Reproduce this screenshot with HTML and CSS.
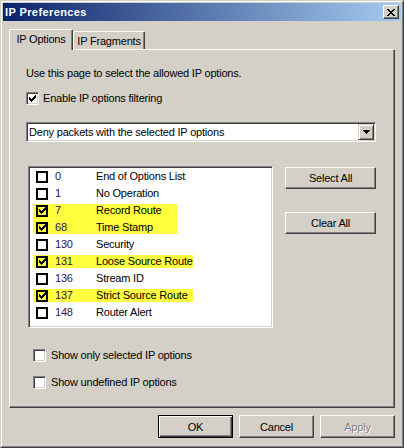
FILE: index.html
```html
<!DOCTYPE html>
<html>
<head>
<meta charset="utf-8">
<title>IP Preferences</title>
<link rel="stylesheet" href="styles.css">
</head>
<body>
<div class="window">
  <div class="frame">
    <div class="titlebar">
      <span class="title">IP Preferences</span>
      <div class="close">
        <svg width="8" height="7" viewBox="0 0 8 7" shape-rendering="crispEdges"><path d="M0 0h2v1H0z M6 0h2v1H6z M1 1h2v1H1z M5 1h2v1H5z M2 2h4v1H2z M3 3h2v1H3z M2 4h4v1H2z M1 5h2v1H1z M5 5h2v1H5z M0 6h2v1H0z M6 6h2v1H6z"/></svg>
      </div>
    </div>
    <div class="client">
      <div class="tabs">
        <div class="tab active">IP Options</div>
        <div class="tab">IP Fragments</div>
      </div>
      <div class="panel">
        <p class="desc">Use this page to select the allowed IP options.</p>
        <div class="check-row enable">
          <span class="cb"><svg width="7" height="7" viewBox="0 0 7 7" shape-rendering="crispEdges"><path d="M6 0h1v1H6z M5 1h2v1H5z M0 2h1v1H0z M4 2h3v1H4z M0 3h2v1H0z M3 3h3v1H3z M0 4h5v1H0z M1 5h3v1H1z M2 6h1v1H2z"/></svg></span>
          <span>Enable IP options filtering</span>
        </div>
        <div class="combo">
          <span class="combo-text">Deny packets with the selected IP options</span>
          <span class="combo-btn"><svg width="7" height="4" viewBox="0 0 7 4" shape-rendering="crispEdges"><path d="M0 0h7v1H0z M1 1h5v1H1z M2 2h3v1H2z M3 3h1v1H3z"/></svg></span>
        </div>
        <div class="list-area">
          <div class="listbox">
            <div class="row"><div class="band"><span class="lcb"></span><span class="num">0</span><span class="name">End of Options List</span></div></div>
            <div class="row"><div class="band"><span class="lcb"></span><span class="num">1</span><span class="name">No Operation</span></div></div>
            <div class="row"><div class="band on join"><span class="lcb"><svg width="7" height="7" viewBox="0 0 7 7" shape-rendering="crispEdges"><path d="M6 0h1v1H6z M5 1h2v1H5z M0 2h1v1H0z M4 2h3v1H4z M0 3h2v1H0z M3 3h3v1H3z M0 4h5v1H0z M1 5h3v1H1z M2 6h1v1H2z"/></svg></span><span class="num">7</span><span class="name">Record Route</span></div></div>
            <div class="row"><div class="band on"><span class="lcb"><svg width="7" height="7" viewBox="0 0 7 7" shape-rendering="crispEdges"><path d="M6 0h1v1H6z M5 1h2v1H5z M0 2h1v1H0z M4 2h3v1H4z M0 3h2v1H0z M3 3h3v1H3z M0 4h5v1H0z M1 5h3v1H1z M2 6h1v1H2z"/></svg></span><span class="num">68</span><span class="name">Time Stamp</span></div></div>
            <div class="row"><div class="band"><span class="lcb"></span><span class="num">130</span><span class="name">Security</span></div></div>
            <div class="row"><div class="band on wide"><span class="lcb"><svg width="7" height="7" viewBox="0 0 7 7" shape-rendering="crispEdges"><path d="M6 0h1v1H6z M5 1h2v1H5z M0 2h1v1H0z M4 2h3v1H4z M0 3h2v1H0z M3 3h3v1H3z M0 4h5v1H0z M1 5h3v1H1z M2 6h1v1H2z"/></svg></span><span class="num">131</span><span class="name">Loose Source Route</span></div></div>
            <div class="row"><div class="band"><span class="lcb"></span><span class="num">136</span><span class="name">Stream ID</span></div></div>
            <div class="row"><div class="band on wide"><span class="lcb"><svg width="7" height="7" viewBox="0 0 7 7" shape-rendering="crispEdges"><path d="M6 0h1v1H6z M5 1h2v1H5z M0 2h1v1H0z M4 2h3v1H4z M0 3h2v1H0z M3 3h3v1H3z M0 4h5v1H0z M1 5h3v1H1z M2 6h1v1H2z"/></svg></span><span class="num">137</span><span class="name">Strict Source Route</span></div></div>
            <div class="row"><div class="band"><span class="lcb"></span><span class="num">148</span><span class="name">Router Alert</span></div></div>
          </div>
          <div class="side-buttons">
            <div class="btn side">Select All</div>
            <div class="btn side">Clear All</div>
          </div>
        </div>
        <div class="check-row opt first">
          <span class="cb"></span>
          <span>Show only selected IP options</span>
        </div>
        <div class="check-row opt second">
          <span class="cb"></span>
          <span>Show undefined IP options</span>
        </div>
      </div>
      <div class="buttons">
        <div class="btn dlg default">OK</div>
        <div class="btn dlg">Cancel</div>
        <div class="btn dlg disabled">Apply</div>
      </div>
    </div>
  </div>
</div>
</body>
</html>
```

FILE: styles.css
```css
* { box-sizing: border-box; }
html, body { margin: 0; padding: 0; }
body {
  background: #D4D0C8;
  font-family: "Liberation Sans", Arial, sans-serif;
  font-size: 11px;
  letter-spacing: -0.2px;
  color: #000;
}
.window {
  width: 404px;
  height: 448px;
  border: 1px solid;
  border-color: #D4D0C8 #404040 #404040 #D4D0C8;
  background: #D4D0C8;
}
.frame {
  height: 100%;
  border: 1px solid;
  border-color: #fff #808080 #808080 #fff;
  padding: 1px;
  display: flex;
  flex-direction: column;
}
.titlebar {
  flex: none;
  height: 18px;
  display: flex;
  align-items: center;
  justify-content: space-between;
  padding: 0 2px;
  background: linear-gradient(to right, #0A246A, #A6CAF0);
}
.title {
  color: #fff;
  font-weight: bold;
  letter-spacing: 0.4px;
  line-height: 13px;
}
.close {
  width: 16px;
  height: 14px;
  background: #D4D0C8;
  border: 1px solid;
  border-color: #fff #404040 #404040 #fff;
  box-shadow: inset -1px -1px #808080;
  display: flex;
  align-items: center;
  justify-content: center;
}
.close svg { fill: #000; }
.client {
  flex: 1;
  padding: 8px 6px 0 6px;
  display: flex;
  flex-direction: column;
}
.tabs {
  display: flex;
  align-items: flex-end;
  height: 20px;
  position: relative;
  z-index: 1;
}
.tab {
  width: 72px;
  height: 18px;
  padding-top: 1px;
  border-top: 1px solid #fff;
  border-left: 1px solid #fff;
  border-right: 1px solid #404040;
  box-shadow: inset -1px 0 #808080;
  border-radius: 2px 2px 0 0;
  text-align: center;
  line-height: 16px;
  white-space: nowrap;
}
.tab.active {
  width: 64px;
  height: 21px;
  padding-top: 0;
  margin-bottom: -1px;
  background: #D4D0C8;
  line-height: 18px;
}
.panel {
  height: 359px;
  border-top: 1px solid #fff;
  border-left: 1px solid #fff;
  border-right: 1px solid #404040;
  border-bottom: 1px solid #404040;
  box-shadow: inset -1px -1px #808080;
  padding-left: 16px;
  display: flex;
  flex-direction: column;
  align-items: flex-start;
}
.desc {
  margin: 17px 0 0 0;
  line-height: 13px;
}
.check-row {
  display: flex;
  align-items: center;
  height: 13px;
  line-height: 13px;
  white-space: nowrap;
}
.check-row.enable { margin-top: 12px; gap: 4px; }
.check-row.opt { margin-left: 7px; gap: 5px; }
.check-row.first { margin-top: 21px; }
.check-row.second { margin-top: 14px; }
.cb {
  flex: none;
  width: 13px;
  height: 13px;
  background: #fff;
  border: 1px solid;
  border-color: #808080 #fff #fff #808080;
  box-shadow: inset 1px 1px #404040, inset -1px -1px #D4D0C8;
  display: flex;
  align-items: center;
  justify-content: center;
}
.cb svg { fill: #000; }
.combo {
  margin-top: 17px;
  width: 350px;
  height: 20px;
  background: #fff;
  border: 1px solid;
  border-color: #808080 #fff #fff #808080;
  box-shadow: inset 1px 1px #404040, inset -1px -1px #D4D0C8;
  padding: 1px;
  display: flex;
  align-items: center;
}
.combo-text {
  flex: 1;
  padding-left: 1px;
  line-height: 16px;
  white-space: nowrap;
}
.combo-btn {
  flex: none;
  width: 16px;
  height: 16px;
  background: #D4D0C8;
  border: 1px solid;
  border-color: #D4D0C8 #404040 #404040 #D4D0C8;
  box-shadow: inset 1px 1px #fff, inset -1px -1px #808080;
  display: flex;
  align-items: center;
  justify-content: center;
}
.combo-btn svg { fill: #000; }
.list-area {
  margin-top: 24px;
  margin-left: 2px;
  display: flex;
  gap: 12px;
}
.listbox {
  width: 245px;
  height: 162px;
  background: #fff;
  border: 1px solid;
  border-color: #808080 #fff #fff #808080;
  box-shadow: inset 1px 1px #404040, inset -1px -1px #D4D0C8;
  padding: 1px;
  display: flex;
  flex-direction: column;
}
.row {
  height: 17px;
  flex: none;
  display: flex;
  align-items: center;
  padding-left: 3px;
}
.band {
  width: 144px;
  height: 13px;
  display: flex;
  align-items: center;
  white-space: nowrap;
}
.band.wide { width: 160px; }
.band.on { background: #ffff40; }
.band.join { box-shadow: 0 4px 0 #ffff40; }
.lcb {
  flex: none;
  margin-left: 3px;
  width: 12px;
  height: 12px;
  border: 2px solid #000;
  display: flex;
  align-items: center;
  justify-content: center;
}
.lcb svg { fill: #000; }
.num {
  flex: none;
  width: 41px;
  margin-left: 7px;
  color: #321250;
  line-height: 13px;
}
.name { line-height: 13px; }
.side-buttons {
  padding-top: 1px;
  display: flex;
  flex-direction: column;
  gap: 23px;
}
.btn {
  background: #D4D0C8;
  border: 1px solid;
  border-color: #fff #404040 #404040 #fff;
  box-shadow: inset -1px -1px #808080;
  display: flex;
  align-items: center;
  justify-content: center;
  white-space: nowrap;
}
.btn.side { width: 91px; height: 22px; }
.buttons {
  margin-top: 7px;
  display: flex;
  justify-content: flex-end;
  gap: 6px;
}
.btn.dlg { width: 75px; height: 23px; }
.btn.default {
  border-color: #000;
  box-shadow: inset 1px 1px #fff, inset -1px -1px #404040, inset -2px -2px #808080;
}
.btn.disabled {
  color: #808080;
  text-shadow: 1px 1px 0 #fff;
}
```
